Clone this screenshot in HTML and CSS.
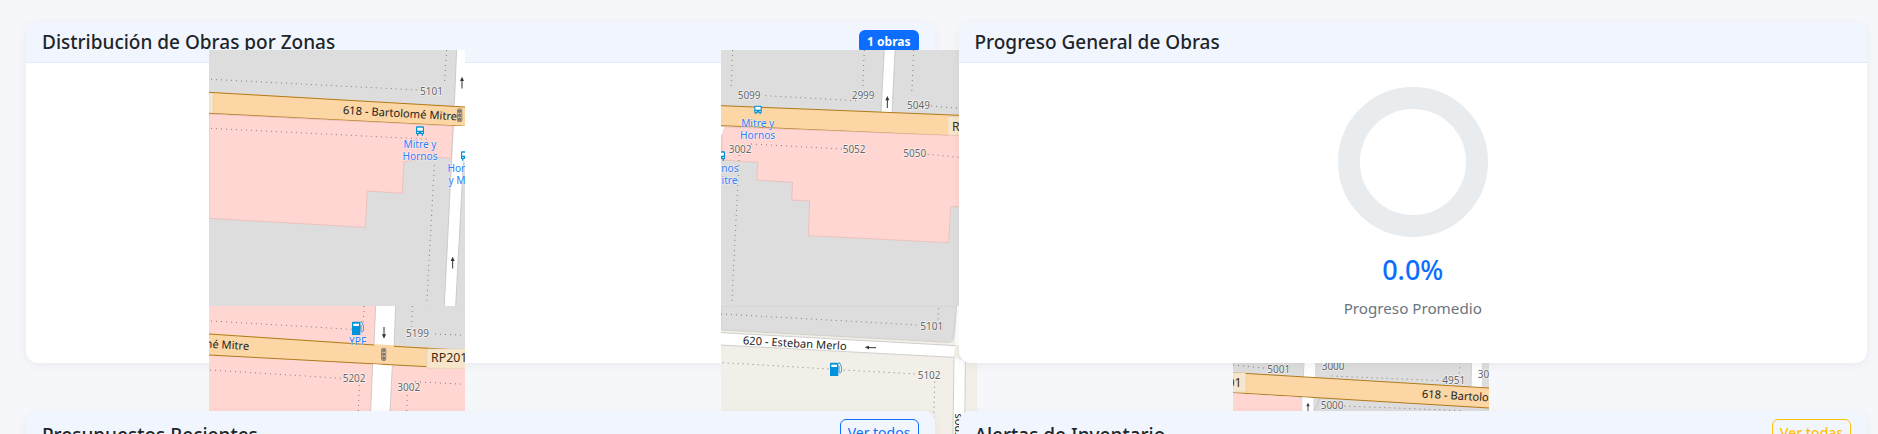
FILE: index.html
```html
<!DOCTYPE html>
<html lang="es">
<head>
<meta charset="utf-8">
<title>Panel de Obras</title>
<link rel="stylesheet" href="styles.css">
</head>
<body>
<svg class="defs" width="0" height="0" aria-hidden="true">
  <defs>
    <symbol id="bus" viewBox="0 0 24 30">
      <path d="M3 1h18a3 3 0 0 1 3 3v20h-3v5h-4v-5H7v5H3v-5H0V4a3 3 0 0 1 3-3z" fill="#0092da"/>
      <rect x="3.5" y="5" width="17" height="9" fill="#fff"/>
      <rect x="3.5" y="18" width="4" height="3" fill="#fff"/>
      <rect x="16.5" y="18" width="4" height="3" fill="#fff"/>
    </symbol>
    <symbol id="fuel" viewBox="0 0 38 42">
      <path d="M2 2h21a2 2 0 0 1 2 2v38H0V4a2 2 0 0 1 2-2z" fill="#0092da"/>
      <rect x="4" y="8" width="17" height="7" fill="#fff"/>
      <path d="M27 0c5 8 8 14 8 22 0 4-1 7-2 9-2 3-5 2-6-1V12" fill="none" stroke="#0092da" stroke-width="2.5"/>
    </symbol>
    <symbol id="light" viewBox="0 0 18 42">
      <rect x="2" y="1" width="14" height="40" rx="7" fill="#e8c797" stroke="#555" stroke-width="2"/>
      <circle cx="9" cy="9" r="4" fill="#888" stroke="#444" stroke-width="1.5"/>
      <circle cx="9" cy="21" r="4" fill="#888" stroke="#444" stroke-width="1.5"/>
      <circle cx="9" cy="33" r="4" fill="#888" stroke="#444" stroke-width="1.5"/>
    </symbol>
    <symbol id="arrow" viewBox="0 0 14 36">
      <path d="M7 36V10" stroke="#333" stroke-width="3" fill="none"/>
      <path d="M1 13L7 0l6 13z" fill="#333"/>
    </symbol>
  </defs>
</svg>
<main class="dashboard">
  <section class="card">
    <header class="card-header">
      <h2 class="card-title">Distribución de Obras por Zonas</h2>
      <span class="badge">1 obras</span>
    </header>
    <div class="card-body map-body">
      <div class="map">
        <svg class="tile tile-a" viewBox="12 15 768 768">
          <rect x="12" y="15" width="768" height="768" fill="#ddd"/>
          <path d="M755 15H780V190L748 185z" fill="#fff"/>
          <path d="M755 15L748 180" class="edge"/>
          <path d="M12 140L780 185V245L12 205z" fill="#fcd6a4"/>
          <path d="M12 143H25V205H12z" class="shield"/>
          <path d="M12 142L780 186M12 205L780 244" class="casing"/>
          <path d="M12 207L745 243L740 340L690 337L597 350L592 445L487 438L481 547L12 520z" fill="#ffd6d1" stroke="#e8b6b0" stroke-width="2"/>
          <path d="M745 243H780V783H718z" fill="#fff"/>
          <path d="M745 243L718 783" class="edge"/>
          <path d="M775 350L752 783H780V350z" fill="#ddd"/>
          <path d="M775 350L752 783" class="edge"/>
          <path d="M18 103L640 135M725 15L718 120M18 250L675 283M688 360L665 780" class="dots"/>
          <text x="645" y="150" class="hn">5101</text>
          <text x="413" y="207" class="road" transform="rotate(3.2 413 207)">618 - Bartolomé Mitre</text>
          <use href="#light" x="755" y="190" width="18" height="42"/>
          <use href="#bus" x="633" y="243" width="24" height="30"/>
          <text x="645" y="309" class="poi">Mitre y</text>
          <text x="645" y="344" class="poi">Hornos</text>
          <use href="#bus" x="768" y="318" width="24" height="30"/>
          <text x="780" y="381" class="poi">Hornos</text>
          <text x="780" y="417" class="poi">y Mitre</text>
          <use href="#arrow" x="764" y="95" width="14" height="36"/>
          <use href="#arrow" x="736" y="635" width="14" height="36"/>
        </svg>
        <svg class="tile tile-b" viewBox="15 15 768 768">
          <rect x="15" y="15" width="768" height="768" fill="#ddd"/>
          <path d="M505 15H537L528 205H495z" fill="#fff"/>
          <path d="M505 15L495 203M537 15L528 203" class="edge"/>
          <path d="M15 182L783 213V276L15 242z" fill="#fcd6a4"/>
          <path d="M15 182L783 213M15 242L783 276" class="casing"/>
          <path d="M695 215H783V276H695z" class="shield"/>
          <path d="M25 245L730 272H783V485H704L698 593L277 572L281 468L227 465L230 412L122 405L125 352L18 345V270z" fill="#ffd6d1" stroke="#e8b6b0" stroke-width="2"/>
          <path d="M15 245H25L18 270H15z" fill="#fff"/>
          <path d="M50 15L45 130M445 15L440 130M593 15L587 150M148 152L420 167M645 183L730 190M105 297L378 312M635 328L730 337M70 330L47 780M668 785V790" class="dots"/>
          <text x="65" y="161" class="hn">5099</text>
          <text x="407" y="162" class="hn">2999</text>
          <text x="573" y="191" class="hn">5049</text>
          <text x="380" y="325" class="hn">5052</text>
          <text x="38" y="323" class="hn">3002</text>
          <text x="562" y="337" class="hn">5050</text>
          <text x="708" y="258" class="shield-text">R</text>
          <use href="#bus" x="114" y="181" width="24" height="28"/>
          <text x="125" y="245" class="poi">Mitre y</text>
          <text x="125" y="281" class="poi">Hornos</text>
          <use href="#bus" x="3" y="318" width="24" height="30"/>
          <text x="15" y="381" class="poi">Hornos</text>
          <text x="15" y="416" class="poi">y Mitre</text>
          <use href="#arrow" x="507" y="153" width="14" height="36"/>
        </svg>
        <svg class="tile tile-c" viewBox="12 18 768 768">
          <rect x="12" y="18" width="768" height="768" fill="#ffd6d1"/>
          <path d="M572 18H780V152L567 140z" fill="#ddd"/>
          <path d="M512 18H572L567 140H507z" fill="#fff"/>
          <path d="M512 18L507 135M572 18L567 140" class="edge"/>
          <path d="M12 100L780 150V205L12 165z" fill="#fcd6a4"/>
          <path d="M12 102L507 135M567 139L780 151M12 165L665 200" class="casing"/>
          <path d="M503 192L562 197L555 333H497z" fill="#fff"/>
          <path d="M503 192L497 333M562 197L555 333" class="edge"/>
          <rect x="665" y="147" width="120" height="58" rx="6" class="shield"/>
          <path d="M18 63L440 88M477 18L475 65M622 18L620 80M690 102L780 106M15 210L410 235M463 255L460 333M630 245L780 253M607 285L605 333" class="dots"/>
          <text x="603" y="111" class="hn">5199</text>
          <text x="413" y="247" class="hn">5202</text>
          <text x="577" y="274" class="hn">3002</text>
          <text x="678" y="187" class="shield-text">RP201</text>
          <text x="132" y="150" class="road road-end" transform="rotate(3.2 132 150)">618 - Bartolomé Mitre</text>
          <use href="#fuel" x="441" y="63" width="38" height="42"/>
          <text x="458" y="136" class="poi">YPF</text>
          <use href="#arrow" x="530" y="80" width="14" height="36" transform="rotate(180 537 98)"/>
          <use href="#light" x="527" y="143" width="18" height="40"/>
        </svg>
        <svg class="tile tile-d" viewBox="15 18 768 768">
          <rect x="15" y="18" width="768" height="768" fill="#f2efe9"/>
          <path d="M15 18H723L712 115Q710 128 695 127L15 90z" fill="#ddd" stroke="#c9c5bd" stroke-width="2"/>
          <path d="M15 98L718 137L712 172L15 135z" fill="#fff"/>
          <path d="M15 98L718 137M15 135L714 172" class="edge"/>
          <path d="M723 18H783V135H718z" fill="#fff"/>
          <path d="M714 172L748 185L742 786H706z" fill="#fff"/>
          <path d="M714 172L706 786M748 185L742 786" class="edge"/>
          <path d="M15 42L605 75M668 25L666 60M20 188L340 207M383 210L600 222M656 245L652 400" class="dots"/>
          <text x="613" y="89" class="hn">5101</text>
          <text x="605" y="236" class="hn">5102</text>
          <text x="80" y="133" class="road" transform="rotate(3.2 80 133)">620 - Esteban Merlo</text>
          <path d="M480 143H456" stroke="#333" stroke-width="3"/>
          <path d="M459 137L446 142L459 148z" fill="#333"/>
          <use href="#fuel" x="342" y="186" width="38" height="42"/>
          <text x="736" y="340" class="road road-end" transform="rotate(-90 736 340)">Hornos</text>
        </svg>
        <svg class="tile tile-e" viewBox="24 -132 768 768">
          <rect x="24" y="-132" width="768" height="768" fill="#ddd"/>
          <path d="M237 -132H270V90H235z" fill="#fff"/>
          <path d="M740 -132H772L770 120H738z" fill="#fff"/>
          <path d="M237 37L235 80M740 37L738 108" class="edge"/>
          <path d="M24 68L792 114V175L24 128z" fill="#fcd6a4"/>
          <path d="M24 68L792 114M24 128L792 174" class="casing"/>
          <path d="M24 130L220 141L232 160V636H24z" fill="#ffd6d1"/>
          <path d="M232 142L265 144V636H232z" fill="#fff"/>
          <rect x="0" y="68" width="63" height="58" rx="6" class="shield"/>
          <path d="M285 146L268 182" class="edge"/>
          <path d="M24 45L125 55M706 37L703 70M320 78L650 92M358 168L710 182" class="dots"/>
          <text x="127" y="68" class="hn">5001</text>
          <text x="290" y="59" class="hn">3000</text>
          <text x="652" y="103" class="hn">4951</text>
          <text x="758" y="83" class="hn">3002</text>
          <text x="287" y="176" class="hn">5000</text>
          <text x="50" y="111" class="shield-text shield-end">RP201</text>
          <text x="590" y="143" class="road" transform="rotate(3.2 590 143)">618 - Bartolomé Mitre</text>
          <use href="#arrow" x="242" y="158" width="14" height="30"/>
        </svg>
      </div>
    </div>
  </section>

  <section class="card">
    <header class="card-header">
      <h2 class="card-title">Progreso General de Obras</h2>
    </header>
    <div class="card-body progress-body">
      <div class="donut"></div>
      <div class="progress-value">0.0%</div>
      <div class="progress-label">Progreso Promedio</div>
    </div>
  </section>

  <section class="card card-low">
    <header class="card-header">
      <h2 class="card-title">Presupuestos Recientes</h2>
      <a class="btn btn-blue">Ver todos</a>
    </header>
    <div class="card-body"></div>
  </section>

  <section class="card card-low">
    <header class="card-header">
      <h2 class="card-title">Alertas de Inventario</h2>
      <a class="btn btn-yellow">Ver todas</a>
    </header>
    <div class="card-body"></div>
  </section>
</main>
</body>
</html>
```

FILE: styles.css
```css
* { box-sizing: border-box; }

html, body {
  margin: 0;
  height: 434px;
  overflow: hidden;
}

body {
  background: #f5f7fb;
  color: #212529;
  font-family: "Noto Sans", "Open Sans", sans-serif;
}

.defs { position: absolute; }

.dashboard {
  display: grid;
  grid-template-columns: 1fr 1fr;
  column-gap: 24px;
  row-gap: 48px;
  padding: 22px 11px 0 26px;
}

.card {
  position: relative;
  display: flex;
  flex-direction: column;
  height: 341px;
  background: #fff;
  border-radius: 12px;
  box-shadow: 0 2px 10px rgba(0, 0, 0, 0.06);
}

.card-low { height: 300px; }

.card-header {
  display: flex;
  align-items: center;
  justify-content: space-between;
  min-height: 41px;
  padding: 8px 16px;
  background: #f1f6fe;
  border-bottom: 1px solid #e0ecfb;
  border-radius: 12px 12px 0 0;
}

.card-title {
  margin: 0;
  font-size: 19px;
  line-height: 24px;
  font-weight: 500;
}

.badge {
  padding: 4px 8px;
  height: 24px;
  background: #0d6efd;
  color: #fff;
  font-size: 12px;
  line-height: 16px;
  font-weight: 700;
  border-radius: 6px;
}

.btn {
  height: 31px;
  width: 79px;
  padding: 2px 0 0;
  border: 1px solid;
  border-radius: 6px;
  font-size: 14px;
  line-height: 21px;
  text-align: center;
}

.btn-blue { color: #0d6efd; border-color: #0d6efd; }
.btn-yellow { color: #ffc107; border-color: #ffc107; font-weight: 500; }

.card-body { flex: 1; }

.map-body { position: relative; }

.map { position: absolute; inset: 0; }

.tile {
  position: absolute;
  width: 256px;
  height: 256px;
  overflow: hidden;
}

.tile-a { left: 183px; top: -13px; }
.tile-b { left: 695px; top: -13px; }
.tile-c { left: 183px; top: 243px; }
.tile-d { left: 695px; top: 243px; }
.tile-e { left: 1207px; top: 243px; }

.edge { fill: none; stroke: #bbb; stroke-width: 2; }
.casing { fill: none; stroke: #b07a1a; stroke-width: 3; }
.shield { fill: #f7e6cc; stroke: #e3d2b5; stroke-width: 2; }
.dots { fill: none; stroke: #808080; stroke-width: 3; stroke-dasharray: 3 12; }

.hn, .road, .poi, .shield-text {
  font-family: "Noto Sans", sans-serif;
  paint-order: stroke;
  stroke-linejoin: round;
}

.hn {
  font-size: 30px;
  fill: #666;
  stroke: #fff;
  stroke-width: 4px;
  stroke-opacity: 0.7;
}

.road {
  font-size: 33.5px;
  fill: #222;
  stroke: none;
}

.road-end { text-anchor: end; }

.poi {
  font-size: 30.5px;
  fill: #2a7fff;
  stroke: #fff;
  stroke-width: 3px;
  stroke-opacity: 0.6;
  text-anchor: middle;
}

.shield-text { font-size: 37px; fill: #3d2b12; }
.shield-end { text-anchor: end; }

.progress-body {
  display: flex;
  flex-direction: column;
  align-items: center;
  padding: 24px;
}

.donut {
  width: 150px;
  height: 150px;
  border: 22px solid #e9ecef;
  border-radius: 50%;
}

.progress-value {
  margin-top: 14px;
  font-size: 27px;
  line-height: 38px;
  font-weight: 500;
  color: #0d6efd;
}

.progress-label {
  margin-top: 9px;
  font-size: 15.2px;
  line-height: 21px;
  color: #6c757d;
}
```
